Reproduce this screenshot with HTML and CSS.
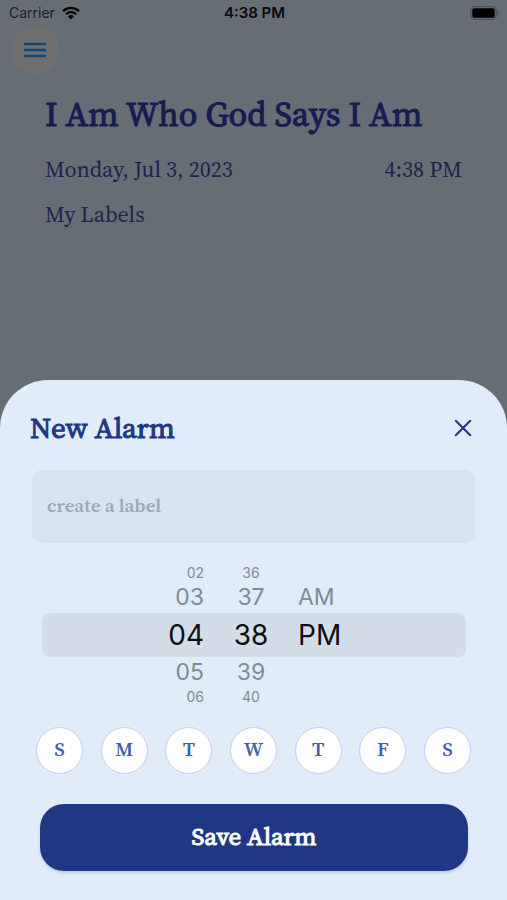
FILE: index.html
```html
<!DOCTYPE html>
<html lang="en">
<head>
<meta charset="utf-8">
<meta name="viewport" content="width=device-width, initial-scale=1">
<title>New Alarm</title>
<link rel="stylesheet" href="styles.css">
</head>
<body>
<div class="status-bar">
  <div class="carrier">
    <span>Carrier</span>
    <svg class="wifi" viewBox="0 0 18 14" aria-hidden="true">
      <path d="M1 5.2a11.4 11.4 0 0 1 16 0" fill="none" stroke="currentColor" stroke-width="2.4"/>
      <path d="M3.9 8.3a7.2 7.2 0 0 1 10.2 0" fill="none" stroke="currentColor" stroke-width="2.3"/>
      <path d="M9 13.6 5.9 10.4a4.5 4.5 0 0 1 6.2 0z" fill="currentColor"/>
    </svg>
  </div>
  <span class="clock">4:38 PM</span>
  <svg class="battery" viewBox="0 0 30 14" aria-hidden="true">
    <rect x=".7" y=".7" width="25.6" height="12.6" rx="4" fill="none" stroke="#4b4f55" stroke-width="1.2"/>
    <rect x="2.3" y="2.3" width="22.4" height="9.4" rx="2" fill="#000"/>
    <path d="M27.6 5c1.8.5 1.8 3.5 0 4z" fill="#4b4f55"/>
  </svg>
</div>
<header class="toolbar">
  <button class="menu" type="button" aria-label="Menu">
    <svg viewBox="0 0 24 18" aria-hidden="true"><path d="M1 3h22M1 9h22M1 15h22" stroke="currentColor" stroke-width="2.6"/></svg>
  </button>
</header>
<main class="home">
  <h1>I Am Who God Says I Am</h1>
  <div class="now"><span>Monday, Jul 3, 2023</span><span>4:38 PM</span></div>
  <p>My Labels</p>
</main>
<form class="sheet" role="dialog" aria-labelledby="sheet-title">
  <div class="sheet-head">
    <h2 id="sheet-title">New Alarm</h2>
    <button class="close" type="button" aria-label="Close">
      <svg viewBox="0 0 18 18" aria-hidden="true"><path d="M1.8 1.8l14.4 14.4M16.2 1.8L1.8 16.2" stroke="currentColor" stroke-width="2.1" stroke-linecap="round"/></svg>
    </button>
  </div>
  <input class="label-input" type="text" placeholder="create a label" aria-label="Label">
  <div class="picker" role="group" aria-label="Alarm time">
    <div class="row far"><span>02</span><span>36</span></div>
    <div class="row near"><span>03</span><span>37</span><span>AM</span></div>
    <div class="row selected"><span>04</span><span>38</span><span>PM</span></div>
    <div class="row near"><span>05</span><span>39</span></div>
    <div class="row far"><span>06</span><span>40</span></div>
  </div>
  <div class="days" role="group" aria-label="Repeat on">
    <button type="button" aria-label="Sunday">S</button>
    <button type="button" aria-label="Monday">M</button>
    <button type="button" aria-label="Tuesday">T</button>
    <button type="button" aria-label="Wednesday">W</button>
    <button type="button" aria-label="Thursday">T</button>
    <button type="button" aria-label="Friday">F</button>
    <button type="button" aria-label="Saturday">S</button>
  </div>
  <button class="save" type="submit">Save Alarm</button>
</form>
</body>
</html>
```
FILE: styles.css
```css
* { box-sizing: border-box; }

:root {
  --serif: "Source Serif 4", "Source Serif Pro", "Liberation Serif", serif;
  --sans: Inter, "Liberation Sans", sans-serif;
  --navy: #203884;
}

body {
  margin: 0;
  min-height: 100vh;
  display: flex;
  flex-direction: column;
  background: #676d75;
  font-family: var(--serif);
}

h1, h2, p { margin: 0; }
button { padding: 0; border: 0; font-family: inherit; }
svg { display: block; }

.status-bar {
  display: grid;
  grid-template-columns: 1fr auto 1fr;
  align-items: center;
  height: 26px;
  padding: 0 7px 0 9px;
  color: #08090b;
  font: 400 14px/26px var(--sans);
}
.carrier { display: flex; align-items: center; gap: 7px; color: #1c1e22; }
.wifi { width: 18px; height: 14px; color: #000; }
.clock { font-size: 15px; font-weight: 600; }
.battery { width: 30px; height: 14px; justify-self: end; }

.toolbar { padding: 0 11px; }
.menu {
  display: grid;
  place-items: center;
  width: 48px;
  height: 48px;
  border-radius: 50%;
  background: #706f70;
  color: #12477c;
}
.menu svg { width: 24px; height: 18px; }

.home {
  padding: 15px 45px 0;
  color: #1c2350;
  font-size: 22px;
  line-height: 45px;
}
.home h1 {
  margin-bottom: 8px;
  color: #161d4f;
  font-size: 34px;
  font-weight: 400;
  line-height: 50px;
  -webkit-text-stroke: 1px;
}
.now { display: flex; justify-content: space-between; }

.sheet {
  display: flex;
  flex-direction: column;
  margin-top: auto;
  padding: 24px 32px 29px;
  border-radius: 48px 48px 0 0;
  background: #e0ecfa;
}
.sheet-head {
  display: flex;
  align-items: center;
  justify-content: space-between;
  height: 48px;
  margin: 0 -1px 18px -2px;
  color: var(--navy);
}
.sheet-head h2 {
  font-size: 29px;
  font-weight: 400;
  line-height: 48px;
  -webkit-text-stroke: 1px;
}
.close {
  display: grid;
  place-items: center;
  width: 26px;
  height: 32px;
  background: none;
  color: var(--navy);
}
.close svg { width: 18px; height: 18px; }

.label-input {
  width: 100%;
  height: 73px;
  padding: 0 15px 3px;
  border: 0;
  border-radius: 10px;
  background: #d7e3f0;
  color: var(--navy);
  font: 600 19px var(--serif);
}
.label-input::placeholder { color: #9ba8b4; opacity: 1; }

.picker { margin: 21px 9px 21px 10px; font-family: var(--sans); }
.row {
  display: grid;
  grid-template-columns: 36px 36px 42px;
  justify-content: center;
  column-gap: 29px;
  text-align: center;
  white-space: nowrap;
}
.row span:first-child { text-align: right; }
.row span:nth-child(3) { text-align: left; }
.far { color: #7f8a97; font-size: 14px; line-height: 18px; }
.near { color: #808b97; font-size: 23px; line-height: 31px; }
.selected {
  border-radius: 8px;
  background: #d3dde8;
  color: #0b0e12;
  font-size: 28px;
  line-height: 44px;
}

.days { display: flex; justify-content: space-between; padding: 0 4px; }
.days button {
  width: 47px;
  height: 47px;
  padding-bottom: 3px;
  border: 1px solid #c9cbf8;
  border-radius: 50%;
  background: #fff;
  color: #4461a4;
  font-size: 20px;
  font-weight: 600;
}

.save {
  height: 67px;
  margin: 30px 7px 0 8px;
  padding-bottom: 4px;
  border-radius: 24px;
  background: var(--navy);
  box-shadow: 0 2px 3px #8e9bb466;
  color: #fff;
  font-size: 25px;
  font-weight: 400;
  -webkit-text-stroke: 1px;
}
```
